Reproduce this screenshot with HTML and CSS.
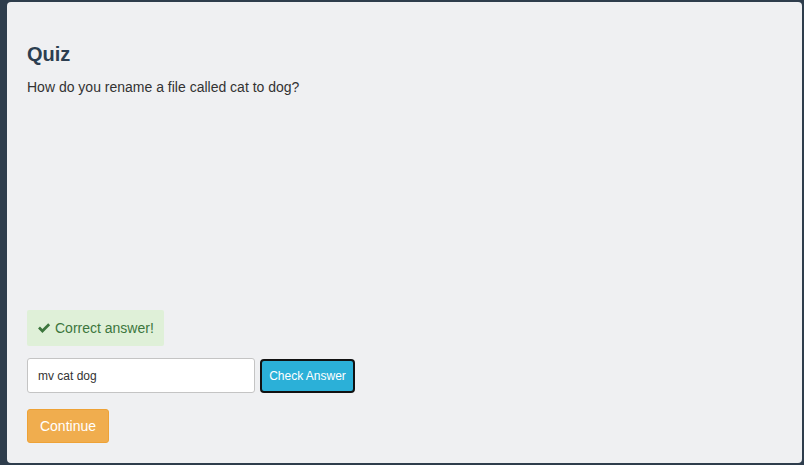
FILE: index.html
```html
<!DOCTYPE html>
<html>
<head>
<meta charset="utf-8">
<link rel="stylesheet" href="styles.css">
</head>
<body>
<div class="panel">
  <div class="question">
    <h2 class="title">Quiz</h2>
    <p class="prompt">How do you rename a file called cat to dog?</p>
  </div>
  <div class="answer">
    <div class="alert">
      <svg class="check" viewBox="0 0 16 16" width="14" height="14"><path d="M1.2 8.6 L3.4 6.4 L6.2 9.2 L12.8 2.6 L15 4.8 L6.2 13.6 Z" fill="#3c763d"/></svg>
      <span>Correct answer!</span>
    </div>
    <div class="row">
      <input class="field" type="text" value="mv cat dog">
      <button class="btn-check">Check Answer</button>
    </div>
    <button class="btn-continue">Continue</button>
  </div>
</div>
</body>
</html>
```

FILE: styles.css
```css
html, body {
  margin: 0;
  padding: 0;
  background: #2e3d4c;
  font-family: "Liberation Sans", Arial, sans-serif;
}

.panel {
  box-sizing: border-box;
  margin: 2px 2px 2px 7px;
  height: 461px;
  background: #eff0f2;
  border-radius: 4px;
  padding: 41px 20px 20px 20px;
  display: flex;
  flex-direction: column;
}

.question {
  flex: 1;
}

.title {
  margin: 0 0 12px 0;
  font-size: 20px;
  line-height: 22px;
  font-weight: bold;
  color: #2c3e50;
}

.prompt {
  margin: 0;
  font-size: 14px;
  line-height: 20px;
  color: #333333;
}

.answer {
  display: flex;
  flex-direction: column;
  align-items: flex-start;
}

.alert {
  box-sizing: border-box;
  height: 36px;
  display: flex;
  align-items: center;
  gap: 4px;
  padding: 0 10px;
  background: #dff0d8;
  color: #3c763d;
  font-size: 14px;
  border-radius: 2px;
  margin-bottom: 12px;
}

.check {
  display: block;
}

.row {
  display: flex;
  align-items: center;
  margin-bottom: 16px;
}

.field {
  box-sizing: border-box;
  width: 228px;
  height: 35px;
  border: 1px solid #c4c4c4;
  border-radius: 3px;
  background: #ffffff;
  padding: 0 10px;
  font-family: "Liberation Sans", Arial, sans-serif;
  font-size: 12px;
  color: #333333;
  margin: 0;
}

.btn-check {
  box-sizing: border-box;
  margin: 0 0 0 5px;
  width: 95px;
  height: 34px;
  background: #2bb0d8;
  border: 2px solid #111111;
  border-radius: 4px;
  color: #ffffff;
  font-family: "Liberation Sans", Arial, sans-serif;
  font-size: 12px;
  padding: 0;
}

.btn-continue {
  box-sizing: border-box;
  width: 82px;
  height: 34px;
  margin: 0;
  padding: 0;
  background: #f0ad4e;
  border: 1px solid #eea236;
  border-radius: 3px;
  color: #ffffff;
  font-family: "Liberation Sans", Arial, sans-serif;
  font-size: 14px;
}
```
